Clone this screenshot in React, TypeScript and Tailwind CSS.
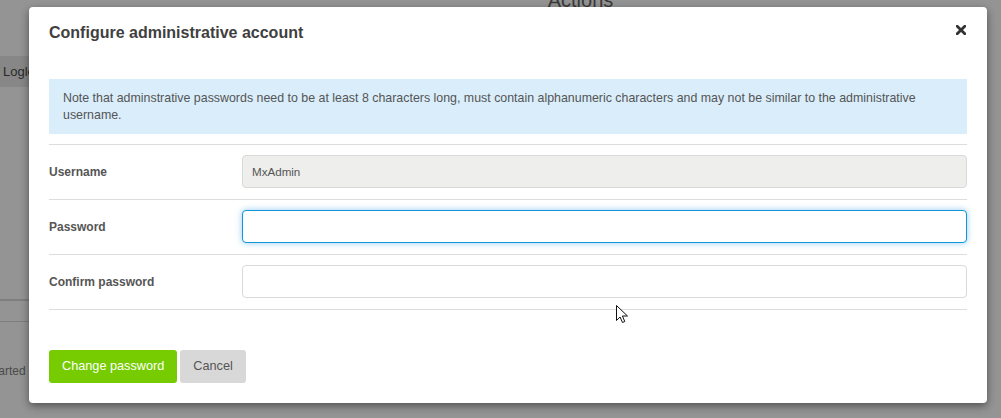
import React from "react";

function Row({ label, children }: { label: string; children: React.ReactNode }) {
  return (
    <div className="flex items-center border-b border-[#dddddd] pt-[10px] pb-[11px]">
      <div className="w-[193px] shrink-0 text-[12px] font-bold text-[#555555]">{label}</div>
      <div className="flex-1">{children}</div>
    </div>
  );
}

export default function App() {
  return (
    <div
      className="relative w-[1001px] h-[418px] overflow-hidden bg-[#949494]"
      style={{ fontFamily: '"Liberation Sans", Arial, sans-serif' }}
    >
      {/* page behind the overlay */}
      <div className="flex h-full">
        <div className="w-[60px] shrink-0 flex flex-col">
          <div className="mt-[56px] h-[31px] bg-[#878787] flex items-center pl-[3px] text-[13px] text-[#2a2a2a]">
            Logle
          </div>
          <div className="mt-[212px] h-[2px] bg-[#7e7e7e]" />
          <div className="mt-[20px] h-[1px] bg-[#7e7e7e]" />
          <div className="mt-[40px] text-[12px] text-[#4a4a4a] -ml-[13px]">Started</div>
        </div>
        <div className="flex-1 flex justify-center">
          <div className="-mt-[15px] ml-[100px] text-[20px] text-[#3a3a3a]">Actions</div>
        </div>
      </div>

      {/* modal */}
      <div className="absolute left-[29px] top-[7px] w-[958px] h-[396px] bg-white rounded-[4px] shadow-[0_3px_9px_rgba(0,0,0,0.45)] px-[20px] pt-[16px]">
        <div className="flex items-center justify-between h-[20px]">
          <div className="text-[16px] font-bold text-[#3f3f3f] leading-[20px]">Configure administrative account</div>
          <svg width="10" height="10" viewBox="0 0 10 10" className="mr-[1px] -mt-[6px]">
            <path d="M1.2 1.2 L8.8 8.8 M8.8 1.2 L1.2 8.8" stroke="#333333" strokeWidth="2.8" strokeLinecap="square" />
          </svg>
        </div>

        <div className="mt-[36px] bg-[#d9edfb] pt-[11px] pb-[10px] px-[14px] text-[12.4px] leading-[17px] text-[#555555]">
          Note that adminstrative passwords need to be at least 8 characters long, must contain alphanumeric characters and may not be similar to the administrative username.
        </div>

        <div className="mt-[10px] border-t border-[#dddddd]">
          <Row label="Username">
            <div className="h-[33px] rounded-[4px] border border-[#d9d9d9] bg-[#eeeeec] flex items-center px-[9px] text-[11.6px] text-[#555555]">
              MxAdmin
            </div>
          </Row>
          <Row label="Password">
            <div className="h-[33px] rounded-[4px] border border-[#0f95d8] bg-white shadow-[0_0_6px_rgba(60,160,230,0.55)]" />
          </Row>
          <Row label="Confirm password">
            <div className="h-[33px] rounded-[4px] border border-[#d9d9d9] bg-white" />
          </Row>
        </div>

        <div className="mt-[40px] flex gap-[3px]">
          <div className="h-[33px] rounded-[3px] bg-[#76cc00] text-white text-[12.7px] flex items-center px-[13px]">
            Change password
          </div>
          <div className="h-[33px] rounded-[3px] bg-[#d8d8d8] text-[#555555] text-[12.7px] flex items-center px-[13px]">
            Cancel
          </div>
        </div>
      </div>

      {/* mouse cursor */}
      <svg className="absolute left-[616px] top-[305px]" width="13" height="19" viewBox="0 0 13 19">
        <path d="M0.5 0.5 L0.5 15.5 L4 12 L6.5 17.5 L8.8 16.5 L6.4 11 L11.5 11 Z" fill="white" stroke="#111" strokeWidth="1" strokeLinejoin="miter" />
      </svg>
    </div>
  );
}
